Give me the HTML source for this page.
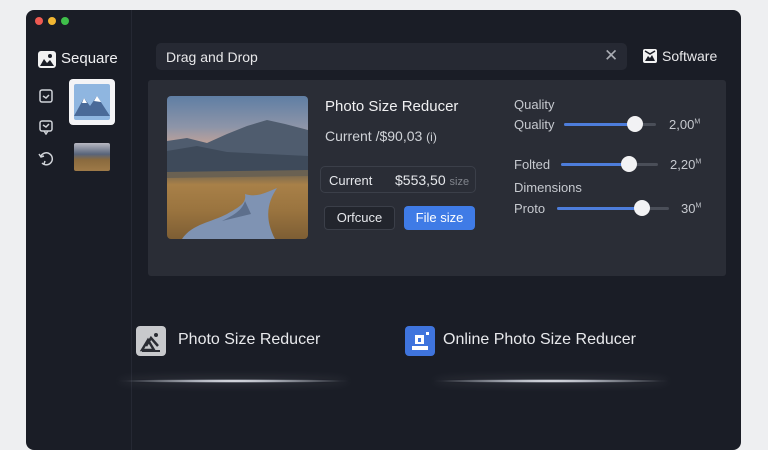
<!DOCTYPE html>
<html><head><style>
*{margin:0;padding:0;box-sizing:border-box}
body{width:768px;height:432px;background:#eeeff1;font-family:"Liberation Sans",sans-serif;overflow:hidden;position:relative;color:#e6e8ec}
.win{position:absolute;left:26px;top:10px;width:715px;height:440px;background:#1a1d26;border-radius:8px;overflow:hidden}
.dot{position:absolute;top:7px;width:8px;height:8px;border-radius:50%}
.side{position:absolute;left:105px;top:0;width:1px;height:100%;background:#252833}
.abs{position:absolute}
.search{left:130px;top:33px;width:471px;height:27px;background:#262933;border-radius:5px;font-size:14px;padding:6px 10px;color:#e8e8ea}
.panel{left:122px;top:70px;width:578px;height:196px;background:#2a2d36;border-radius:3px}
.slider{position:absolute;height:3px;background:#4a4e58;border-radius:2px}
.slider i{position:absolute;left:0;top:0;height:3px;background:#4d7ddb;border-radius:2px}
.slider b{position:absolute;top:-7px;width:16px;height:16px;border-radius:50%;background:#f2f2f4}
.lbl{position:absolute;font-size:13px;color:#c6c9cf}
.glow{position:absolute;height:4px;border-radius:50%;background:radial-gradient(ellipse at center,#fff 0%,rgba(230,235,245,.8) 25%,rgba(150,160,180,0) 70%);box-shadow:0 0 10px rgba(255,255,255,.2)}
</style></head><body>
<div class="win">
 <div class="dot" style="left:9px;background:#ee5a52"></div>
 <div class="dot" style="left:22px;background:#f2b632"></div>
 <div class="dot" style="left:35px;background:#3fbf4a"></div>
 <div class="side"></div>
 <svg class="abs" style="left:12px;top:41px" width="18" height="17" viewBox="0 0 18 17"><rect width="18" height="17" rx="3" fill="#f2f2f2"/><path d="M2 15 L6 8 L9 12 L12 9 L16 15Z" fill="#1a1d26"/><circle cx="12" cy="5" r="2" fill="#1a1d26"/></svg>
 <div class="abs" style="left:35px;top:40px;font-size:15px;color:#f0f0f2">Sequare</div>
 <svg class="abs" style="left:13px;top:79px" width="14" height="14" viewBox="0 0 14 14" fill="none" stroke="#d0d3d8" stroke-width="1.5"><rect x="1" y="1" width="12" height="12" rx="2"/><path d="M4 7l3 2 3-3"/></svg>
 <svg class="abs" style="left:13px;top:110px" width="14" height="15" viewBox="0 0 14 15" fill="none" stroke="#d0d3d8" stroke-width="1.5"><rect x="1" y="1" width="12" height="10" rx="2"/><path d="M4 5l3 2 3-3M5 11l2 3 2-3"/></svg>
 <svg class="abs" style="left:12px;top:141px" width="16" height="15" viewBox="0 0 16 15" fill="none" stroke="#d0d3d8" stroke-width="1.5"><path d="M3 5a6 6 0 1 1 1 7M1 3l2 3 3-1M6 13l1-3"/></svg>
 <div class="abs" style="left:43px;top:69px;width:46px;height:46px;background:#f4f4f6;border-radius:4px;padding:5px">
  <svg width="36" height="36" viewBox="0 0 36 36"><rect width="36" height="36" rx="2" fill="#8fb6e0"/><path d="M0 32 L10 14 L16 22 L23 12 L36 32Z" fill="#4a6a98"/><path d="M10 14 L13 19 L8 19Z M23 12 L27 18 L20 17Z" fill="#fff"/></svg>
 </div>
 <div class="abs" style="left:48px;top:133px;width:36px;height:28px;border-radius:2px;background:linear-gradient(#b8b8c2 0%,#58647a 40%,#8a6a3e 60%,#9e7a48 100%)"></div>
 <div class="abs search">Drag and Drop</div>
 <div class="abs" style="left:578px;top:36px;font-size:17px;color:#a9acb3">✕</div>
 <svg class="abs" style="left:617px;top:39px" width="14" height="14" viewBox="0 0 14 14"><rect width="14" height="14" rx="2" fill="#f2f2f2"/><path d="M2 12 L5 7 L7 9 L9 6 L12 12Z" fill="#1a1d26"/><path d="M2 2l5 3 5-3" stroke="#1a1d26" stroke-width="1.5" fill="none"/></svg>
 <div class="abs" style="left:636px;top:38px;font-size:14px;color:#e8e8ea">Software</div>
 <div class="abs panel">
  <div class="abs" style="left:19px;top:16px;width:141px;height:143px;border-radius:4px;overflow:hidden;background:linear-gradient(#5f7ea4 0%,#8e95a8 22%,#c9a496 36%,#c9a496 38%,#7a6a50 55%,#a88048 62%,#9a743f 80%,#7e5e34 100%)">
   <svg class="abs" style="left:0;top:0" width="141" height="143" viewBox="0 0 141 143"><path d="M0 45 L20 42 L40 47 L60 38 L80 30 L100 24 L118 28 L141 34 L141 78 L0 78Z" fill="#4f5c6e"/><path d="M0 55 L30 50 L60 56 L141 60 L141 78 L0 78Z" fill="#3e4a5a"/><path d="M0 76 L141 74 L141 80 L0 82Z" fill="#6a6152"/><path d="M15 143 C25 128 45 126 60 118 C70 112 80 108 78 98 C90 102 100 96 110 92 C102 104 96 120 108 143Z" fill="#7f93b3"/><path d="M55 125 C65 120 75 115 78 105 L84 118 Z" fill="#5d6f8c"/></svg>
  </div>
  <div class="abs" style="left:177px;top:18px;font-size:15px;color:#f0f0f2">Photo Size Reducer</div>
  <div class="abs" style="left:177px;top:48px;font-size:14px;color:#d0d3d8">Current /$90,03 <span style="font-size:12px">(i)</span></div>
  <div class="abs" style="left:172px;top:86px;width:156px;height:27px;border:1px solid #3b3f49;border-radius:5px;font-size:13px;padding:6px 8px">Current<span style="position:absolute;left:74px;top:5px;font-size:14px">$553,50 <span style="font-size:11px;color:#80848c">size</span></span></div>
  <div class="abs" style="left:176px;top:126px;width:71px;height:24px;border:1px solid #3b3f49;border-radius:4px;font-size:13px;text-align:center;line-height:22px;background:#22252d">Orfcuce</div>
  <div class="abs" style="left:256px;top:126px;width:71px;height:24px;background:#3f7be6;border-radius:4px;font-size:13px;text-align:center;line-height:24px;color:#fff">File size</div>
  <div class="lbl" style="left:366px;top:17px">Quality</div>
  <div class="lbl" style="left:366px;top:37px">Quality</div>
  <div class="slider" style="left:416px;top:43px;width:92px"><i style="width:70px"></i><b style="left:63px"></b></div>
  <div class="lbl" style="left:521px;top:37px">2,00<sup style="font-size:7px">M</sup></div>
  <div class="lbl" style="left:366px;top:77px">Folted</div>
  <div class="slider" style="left:413px;top:83px;width:97px"><i style="width:68px"></i><b style="left:60px"></b></div>
  <div class="lbl" style="left:522px;top:77px">2,20<sup style="font-size:7px">M</sup></div>
  <div class="lbl" style="left:366px;top:100px">Dimensions</div>
  <div class="lbl" style="left:366px;top:121px">Proto</div>
  <div class="slider" style="left:409px;top:127px;width:112px"><i style="width:84px"></i><b style="left:77px"></b></div>
  <div class="lbl" style="left:533px;top:121px">30<sup style="font-size:7px">M</sup></div>
 </div>
 <svg class="abs" style="left:110px;top:316px" width="30" height="30" viewBox="0 0 30 30"><rect width="30" height="30" rx="4" fill="#c8c9cc"/><path d="M6 24 L12 14 L18 24Z M10 20 L15 12 L22 20" fill="none" stroke="#2a2c33" stroke-width="2.5"/><path d="M6 25h18" stroke="#2a2c33" stroke-width="2"/><circle cx="20" cy="9" r="2" fill="#2a2c33"/></svg>
 <div class="abs" style="left:152px;top:321px;font-size:16px;color:#e8e9ec">Photo Size Reducer</div>
 <div class="glow" style="left:90px;top:369px;width:235px"></div>
 <svg class="abs" style="left:379px;top:316px" width="30" height="30" viewBox="0 0 30 30"><rect width="30" height="30" rx="4" fill="#3f74dd"/><rect x="10" y="9" width="9" height="9" fill="#fff"/><rect x="13" y="12" width="3" height="4" fill="#3f74dd"/><rect x="21" y="6" width="3" height="3" fill="#fff"/><rect x="7" y="20" width="16" height="4" fill="#fff"/></svg>
 <div class="abs" style="left:417px;top:321px;font-size:16px;color:#e8e9ec">Online Photo Size Reducer</div>
 <div class="glow" style="left:405px;top:369px;width:240px"></div>
</div>
</body></html>
